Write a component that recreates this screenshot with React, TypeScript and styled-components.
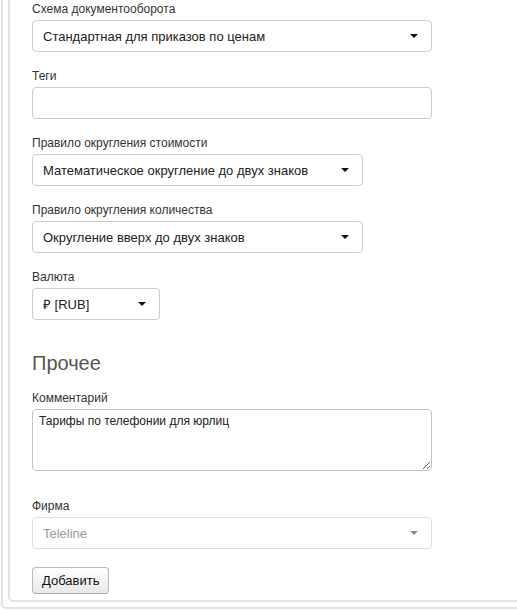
import styled, { createGlobalStyle } from "styled-components";

const GlobalStyle = createGlobalStyle`
  html, body {
    margin: 0;
    padding: 0;
    overflow: hidden;
    background: #fff;
  }
  body {
    font-family: "Liberation Sans", Arial, Helvetica, sans-serif;
    color: #333;
  }
`;

const Panel = styled.div`
  width: 560px;
  margin: -20px 0 0 1px;
  border: 2px solid #e2e2e2;
  border-radius: 5px;
  padding: 5px;
`;

const Well = styled.div`
  border: 2px solid #e2e2e2;
  border-radius: 5px;
  padding: 11px 22px 6px 22px;
`;

const Group = styled.div<{ $mb?: number }>`
  margin-bottom: ${p => (p.$mb ?? 15)}px;
`;

const Label = styled.label`
  display: block;
  font-size: 12px;
  line-height: 15px;
  padding-top: 2px;
  margin-bottom: 3px;
  color: #333;
`;

const Select = styled.button<{ $width: number; $disabled?: boolean }>`
  display: flex;
  align-items: center;
  box-sizing: border-box;
  width: ${p => p.$width}px;
  height: 32px;
  padding: 0 13px 0 10px;
  background: #fff;
  border: 1px solid ${p => (p.$disabled ? "#e0e0e0" : "#ccc")};
  border-radius: 4px;
  font-family: inherit;
  font-size: 13px;
  color: ${p => (p.$disabled ? "#999" : "#222")};
  text-align: left;
  cursor: ${p => (p.$disabled ? "default" : "pointer")};
`;

const SelectText = styled.span`
  flex: 1;
  white-space: nowrap;
  overflow: hidden;
`;

const Caret = styled.span<{ $muted?: boolean }>`
  width: 0;
  height: 0;
  margin-left: 8px;
  border-top: 4px solid ${p => (p.$muted ? "#888" : "#111")};
  border-left: 4px solid transparent;
  border-right: 4px solid transparent;
`;

const TextInput = styled.input`
  display: block;
  box-sizing: border-box;
  width: 400px;
  height: 32px;
  padding: 0 10px;
  border: 1px solid #ccc;
  border-radius: 4px;
  font-family: inherit;
  font-size: 13px;
  outline: none;
`;

const TextArea = styled.textarea`
  display: block;
  box-sizing: border-box;
  width: 400px;
  height: 62px;
  padding: 4px 6px;
  border: 1px solid #c4c4c4;
  border-radius: 4px;
  font-family: inherit;
  font-size: 12px;
  line-height: 15px;
  color: #222;
  outline: none;
`;

const SectionTitle = styled.h3`
  margin: 32px 0 14px;
  font-size: 20px;
  line-height: 23px;
  font-weight: normal;
  color: #555;
`;

const Button = styled.button`
  display: block;
  margin-top: 18px;
  height: 27px;
  padding: 0 9px;
  border: 1px solid #bbb;
  border-bottom-color: #aaa;
  border-radius: 4px;
  background: linear-gradient(#fff, #e8e8e8);
  font-family: inherit;
  font-size: 13px;
  color: #111;
  cursor: pointer;
`;

interface DropdownProps {
  label: string;
  value: string;
  width: number;
  disabled?: boolean;
}

function Dropdown({ label, value, width, disabled }: DropdownProps) {
  return (
    <Group $mb={disabled ? 0 : 15}>
      <Label>{label}</Label>
      <Select type="button" $width={width} $disabled={disabled}>
        <SelectText>{value}</SelectText>
        <Caret $muted={disabled} />
      </Select>
    </Group>
  );
}

export default function App() {
  return (
    <>
      <GlobalStyle />
      <Panel>
        <Well>
          <Dropdown label="Схема документооборота" value="Стандартная для приказов по ценам" width={400} />
          <Group>
            <Label>Теги</Label>
            <TextInput />
          </Group>
          <Dropdown label="Правило округления стоимости" value="Математическое округление до двух знаков" width={331} />
          <Dropdown label="Правило округления количества" value="Округление вверх до двух знаков" width={331} />
          <Dropdown label="Валюта" value="₽ [RUB]" width={128} />

          <SectionTitle>Прочее</SectionTitle>
          <Group $mb={26}>
            <Label>Комментарий</Label>
            <TextArea defaultValue="Тарифы по телефонии для юрлиц" />
          </Group>
          <Dropdown label="Фирма" value="Teleline" width={400} disabled />

          <Button type="button">Добавить</Button>
        </Well>
      </Panel>
    </>
  );
}
